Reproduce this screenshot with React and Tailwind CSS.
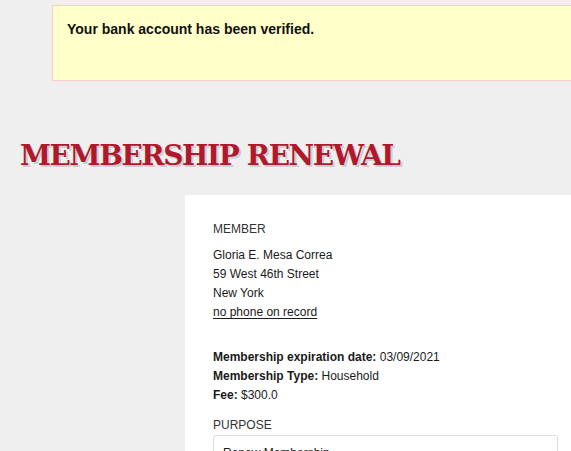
import React from 'react';

const App = () => {
    return (
        <div className="min-h-[451px] bg-[#efefef] font-['Liberation_Sans',Arial,sans-serif] text-[#333] overflow-hidden">
            {/* Notice */}
            <div className="pt-[5px] pl-[52px]">
                <div className="h-[76px] border border-r-0 border-[#ffcccc] bg-[#ffffca] px-[14px] pt-[14px]">
                    <p className="text-[14px] font-bold text-[#111] leading-[18px]">Your bank account has been verified.</p>
                </div>
            </div>

            {/* Title */}
            <h1 className="mt-[58px] ml-[20px] text-[28px] leading-[34px] font-bold tracking-[-1.4px] text-[#b0182b] font-['DejaVu_Serif',serif] [text-shadow:2px_2px_0_#cdcdd4]">
                MEMBERSHIP RENEWAL
            </h1>

            {/* Card */}
            <div className="mt-[22px] ml-[185px] bg-white pl-[28px] pr-[13px] pt-[27px] pb-10">
                <h2 className="text-[12px] leading-[14px] font-normal uppercase text-[#333]">Member</h2>
                <div className="mt-[10px] text-[12px] leading-[19px] text-[#1a1a1a]">
                    <div>Gloria E. Mesa Correa</div>
                    <div>59 West 46th Street</div>
                    <div>New York</div>
                    <a className="underline underline-offset-2">no phone on record</a>
                </div>

                <div className="mt-[26px] text-[12px] leading-[19px] text-[#1a1a1a]">
                    <div><span className="font-bold">Membership expiration date:</span> 03/09/2021</div>
                    <div><span className="font-bold">Membership Type:</span> Household</div>
                    <div><span className="font-bold">Fee:</span> $300.0</div>
                </div>

                <h2 className="mt-[13px] text-[12px] leading-[14px] font-normal uppercase text-[#333]">Purpose</h2>
                <div className="mt-[3px] h-[34px] border border-[#ddd] rounded-[3px] px-[9px] pt-[8px] text-[12px] text-[#1a1a1a]">
                    Renew Membership
                </div>
            </div>
        </div>
    );
};

export default App;
